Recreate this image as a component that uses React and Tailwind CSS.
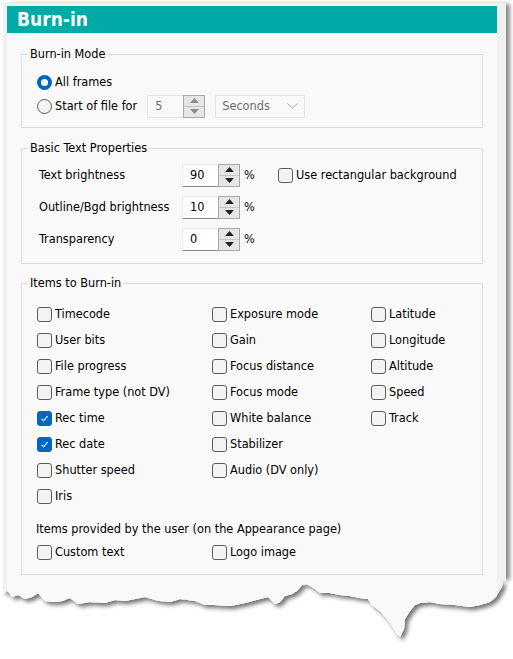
import React from 'react';

const font = { fontFamily: '"DejaVu Sans Condensed", "DejaVu Sans", sans-serif' };

function Check({ checked, label }) {
  return (
    <div className="flex items-center h-[26px] gap-[3px]">
      <span
        className={`w-[15px] h-[15px] rounded-[3px] border flex items-center justify-center shrink-0 ${
          checked ? 'bg-[#0067c0] border-[#0067c0]' : 'bg-[#f3f3f3] border-[#5c5c5c]'
        }`}
      >
        {checked && (
          <svg width="9" height="9" viewBox="0 0 9 9">
            <path d="M1.5 4.8 L3.6 6.8 L7.6 2.2" fill="none" stroke="white" strokeWidth="1.1" />
          </svg>
        )}
      </span>
      <span>{label}</span>
    </div>
  );
}

function Radio({ checked, label }) {
  return (
    <div className="flex items-center h-[24px] gap-[3px]">
      <span
        className={`w-[15px] h-[15px] rounded-full flex items-center justify-center shrink-0 ${
          checked ? 'bg-[#0067c0]' : 'bg-[#f3f3f3] border border-[#5c5c5c]'
        }`}
      >
        {checked && <span className="w-[7px] h-[7px] rounded-full bg-white" />}
      </span>
      <span>{label}</span>
    </div>
  );
}

function Spin({ value, disabled }) {
  return (
    <div
      className={`flex w-[58px] h-[23px] border ${
        disabled ? 'bg-[#f9f9f9] border-[#e5e5e5] text-[#6d6d6d]' : 'bg-white border-[#ececec] border-b-[#8a8a8a]'
      }`}
    >
      <span className="flex-1 flex items-center pl-[7px]">{value}</span>
      <span className="w-[22px] flex flex-col border border-[#a8a8a8] bg-[#e6e6e6] -my-[1px] -mr-[1px]">
        <span className="flex-1 flex items-center justify-center border-b border-[#c4c4c4]">
          <svg width="9" height="5" viewBox="0 0 9 5">
            <path d="M0 5 L4.5 0 L9 5 Z" fill={disabled ? '#8a8a8a' : '#222'} />
          </svg>
        </span>
        <span className="flex-1 flex items-center justify-center">
          <svg width="9" height="5" viewBox="0 0 9 5">
            <path d="M0 0 L4.5 5 L9 0 Z" fill={disabled ? '#8a8a8a' : '#222'} />
          </svg>
        </span>
      </span>
    </div>
  );
}

// fieldset with legend at a fixed offset, content padding lives on the inner div
function Group({ title, children, className, inner }) {
  return (
    <fieldset className={`border border-[#dcdcdc] mx-[14px] ${className}`}>
      <legend className="ml-[6px] px-[2px] leading-[14px]">{title}</legend>
      <div className={inner}>{children}</div>
    </fieldset>
  );
}

const torn =
  'M0 0 L500 0 L499 6 L496 11 L493 16 L487 21 L477 24 L467 26 L452 24 L437 23 L427 21 L417 22 L412 24 L407 30 L402 38 L401 48 L397 56 L393 52 L389 45 L384 38 L377 30 L369 24 L365 18 L357 17 L347 15 L337 14 L327 12 L317 12 L312 8 L304 3 L299 4 L294 10 L289 13 L282 15 L277 21 L272 23 L265 16 L257 18 L242 22 L227 25 L212 24 L202 24 L192 20 L177 18 L167 21 L157 20 L152 19 L142 16 L132 18 L122 20 L112 19 L102 22 L87 21 L75 23 L67 17 L59 20 L52 21 L42 20 L35 12 L29 16 L22 18 L15 14 L9 16 L5 10 L0 12 Z';

export default function App() {
  const col1 = ['Timecode', 'User bits', 'File progress', 'Frame type (not DV)', 'Rec time', 'Rec date', 'Shutter speed', 'Iris'];
  const col2 = ['Exposure mode', 'Gain', 'Focus distance', 'Focus mode', 'White balance', 'Stabilizer', 'Audio (DV only)'];
  const col3 = ['Latitude', 'Longitude', 'Altitude', 'Speed', 'Track'];

  return (
    <div className="w-[513px] h-[659px] bg-white pt-[3px] pl-[3px] text-[12.6px] text-black" style={font}>
      <div className="w-[503px] bg-[#f0f0f0] pl-[4px] pr-[9px] pt-[3px] shadow-[5px_0_4px_-1px_rgba(0,0,0,0.45)]">
        <div className="bg-[#f9f9f9] pb-[6px]">
          <div className="h-[27px] bg-[#00aaa7] text-white font-bold text-[19px] leading-[27px] pl-[10px]">
            Burn-in
          </div>

          <Group title="Burn-in Mode" className="mt-[14px]" inner="pl-[15px] pt-[9px] pb-[9px]">
            <Radio checked label="All frames" />
            <div className="flex items-center gap-[10px]">
              <Radio label="Start of file for" />
              <Spin value="5" disabled />
              <div className="w-[90px] h-[23px] border border-[#e5e5e5] bg-[#f9f9f9] flex items-center justify-between px-[6px] text-[#6d6d6d]">
                <span>Seconds</span>
                <svg width="11" height="6" viewBox="0 0 11 6">
                  <path d="M0.5 0.5 L5.5 5 L10.5 0.5" fill="none" stroke="#a0a0a0" />
                </svg>
              </div>
            </div>
          </Group>

          <Group title="Basic Text Properties" className="mt-[13px]" inner="pl-[17px] pt-[4px] pb-[8px]">
            {[
              ['Text brightness', '90'],
              ['Outline/Bgd brightness', '10'],
              ['Transparency', '0'],
            ].map(([label, v], i) => (
              <div key={label} className="flex items-center h-[32px]">
                <span className="w-[143px]">{label}</span>
                <Spin value={v} />
                <span className="ml-[4px] w-[34px]">%</span>
                {i === 0 && <Check label="Use rectangular background" />}
              </div>
            ))}
          </Group>

          <Group title="Items to Burn-in" className="mt-[12px]" inner="pl-[15px] pt-[11px] pb-[9px]">
            <div className="flex">
              <div className="w-[175px]">
                {col1.map((l) => (
                  <Check key={l} label={l} checked={l === 'Rec time' || l === 'Rec date'} />
                ))}
              </div>
              <div className="w-[159px]">
                {col2.map((l) => (
                  <Check key={l} label={l} />
                ))}
              </div>
              <div>
                {col3.map((l) => (
                  <Check key={l} label={l} />
                ))}
              </div>
            </div>
            <div className="mt-[13px] leading-[14px] -ml-[1px]">Items provided by the user (on the Appearance page)</div>
            <div className="flex mt-[3px]">
              <div className="w-[175px]">
                <Check label="Custom text" />
              </div>
              <Check label="Logo image" />
            </div>
          </Group>
        </div>
      </div>

      <svg width="510" height="62" viewBox="0 0 510 62" className="block">
        <defs>
          <clipPath id="torn">
            <path d={torn} />
          </clipPath>
          <filter id="sh" x="-5%" y="-20%" width="115%" height="160%">
            <feDropShadow dx="3" dy="3" stdDeviation="2" floodColor="#000" floodOpacity="0.55" />
          </filter>
        </defs>
        <g filter="url(#sh)">
          <g clipPath="url(#torn)">
            <rect x="0" y="0" width="503" height="62" fill="#f0f0f0" />
            <rect x="4" y="0" width="490" height="62" fill="#f9f9f9" />
          </g>
        </g>
      </svg>
    </div>
  );
}
